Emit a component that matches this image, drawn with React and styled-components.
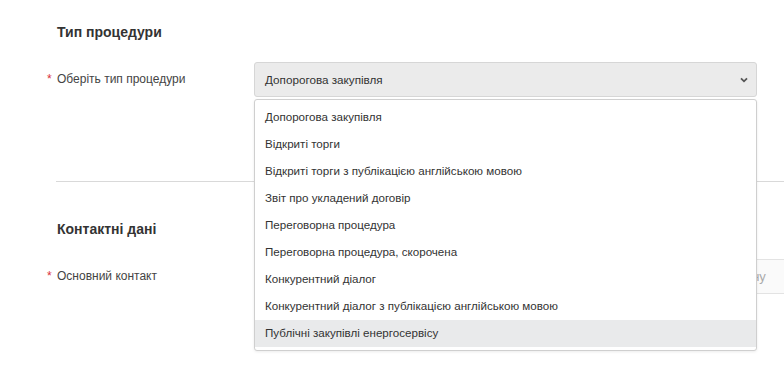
import * as React from 'react';
import styled, { createGlobalStyle } from 'styled-components';

const GlobalStyle = createGlobalStyle`
  html, body {
    margin: 0;
    padding: 0;
    background: #fff;
    overflow: hidden;
  }
  body {
    font-family: "Liberation Sans", Arial, sans-serif;
    color: #333;
  }
`;

const procedures = [
  'Допорогова закупівля',
  'Відкриті торги',
  'Відкриті торги з публікацією англійською мовою',
  'Звіт про укладений договір',
  'Переговорна процедура',
  'Переговорна процедура, скорочена',
  'Конкурентний діалог',
  'Конкурентний діалог з публікацією англійською мовою',
  'Публічні закупівлі енергосервісу',
];

const Chevron = () => (
  <svg width="8" height="6" viewBox="0 0 8 6">
    <path d="M1 1.3 L4 4.3 L7 1.3" fill="none" stroke="#555" strokeWidth="1.8" />
  </svg>
);

const App = () => (
  <Page>
    <GlobalStyle />
    <Section>
      <SectionTitle>Тип процедури</SectionTitle>
      <FormRow>
        <Label>
          <Required>*</Required>Оберіть тип процедури
        </Label>
        <SelectWrap>
          <Select>
            <span>Допорогова закупівля</span>
            <Chevron />
          </Select>
          <Menu>
            {procedures.map((item, i) => (
              <MenuItem key={item} active={i === procedures.length - 1}>
                {item}
              </MenuItem>
            ))}
          </Menu>
        </SelectWrap>
      </FormRow>
    </Section>
    <Section divided>
      <SectionTitle>Контактні дані</SectionTitle>
      <FormRow>
        <Label>
          <Required>*</Required>Основний контакт
        </Label>
        <Input placeholder="Оберіть контактну особу зі списку представників організації або додайте її вручну" />
      </FormRow>
    </Section>
  </Page>
);

export default App;

const Page = styled.div`
  width: 784px;
  height: 366px;
  overflow: hidden;
  padding-left: 56px;
  box-sizing: border-box;
`;

const Section = styled.section`
  display: flex;
  flex-direction: column;
  gap: 20px;
  width: 760px;
  padding: ${({ divided }) => (divided ? '37px 0 40px' : '22px 0 84px')};
  border-top: ${({ divided }) => (divided ? '1px solid #d9d9d9' : 'none')};
`;

const SectionTitle = styled.h3`
  margin: 0 0 0 1px;
  font-size: 14px;
  line-height: 20px;
  font-weight: 700;
  color: #333;
`;

const FormRow = styled.div`
  display: flex;
  align-items: flex-start;
`;

const Label = styled.label`
  width: 198px;
  flex-shrink: 0;
  padding-top: 9px;
  font-size: 12px;
  line-height: 16px;
  color: #444;
`;

const Required = styled.span`
  display: inline-block;
  width: 10px;
  margin-left: -9px;
  color: #d9303a;
`;

const SelectWrap = styled.div`
  position: relative;
  width: 503px;
`;

const Select = styled.div`
  display: flex;
  align-items: center;
  justify-content: space-between;
  height: 35px;
  box-sizing: border-box;
  padding: 0 8px 0 10px;
  border: 1px solid #d6d6d6;
  border-radius: 3px;
  background: #ebebeb;
  font-size: 11.7px;
  color: #333;
`;

const Menu = styled.ul`
  position: absolute;
  top: 37px;
  left: 0;
  right: 0;
  z-index: 2;
  margin: 0;
  padding: 4px 0 3px;
  list-style: none;
  background: #fff;
  border: 1px solid #cfcfcf;
  border-radius: 3px;
  box-shadow: 0 1px 3px rgba(0, 0, 0, 0.08);
`;

const MenuItem = styled.li`
  height: 27px;
  line-height: 26px;
  padding: 0 10px;
  font-size: 11.6px;
  color: #333;
  background: ${({ active }) => (active ? '#e9eaeb' : 'transparent')};
`;

const Input = styled.input`
  width: 560px;
  height: 35px;
  box-sizing: border-box;
  padding: 0 10px 0 17px;
  border: 1px solid #e3e3e3;
  border-radius: 3px;
  background: #fafafa;
  font-family: inherit;
  font-size: 13px;
  color: #333;

  &::placeholder {
    color: #aaa;
  }
`;
